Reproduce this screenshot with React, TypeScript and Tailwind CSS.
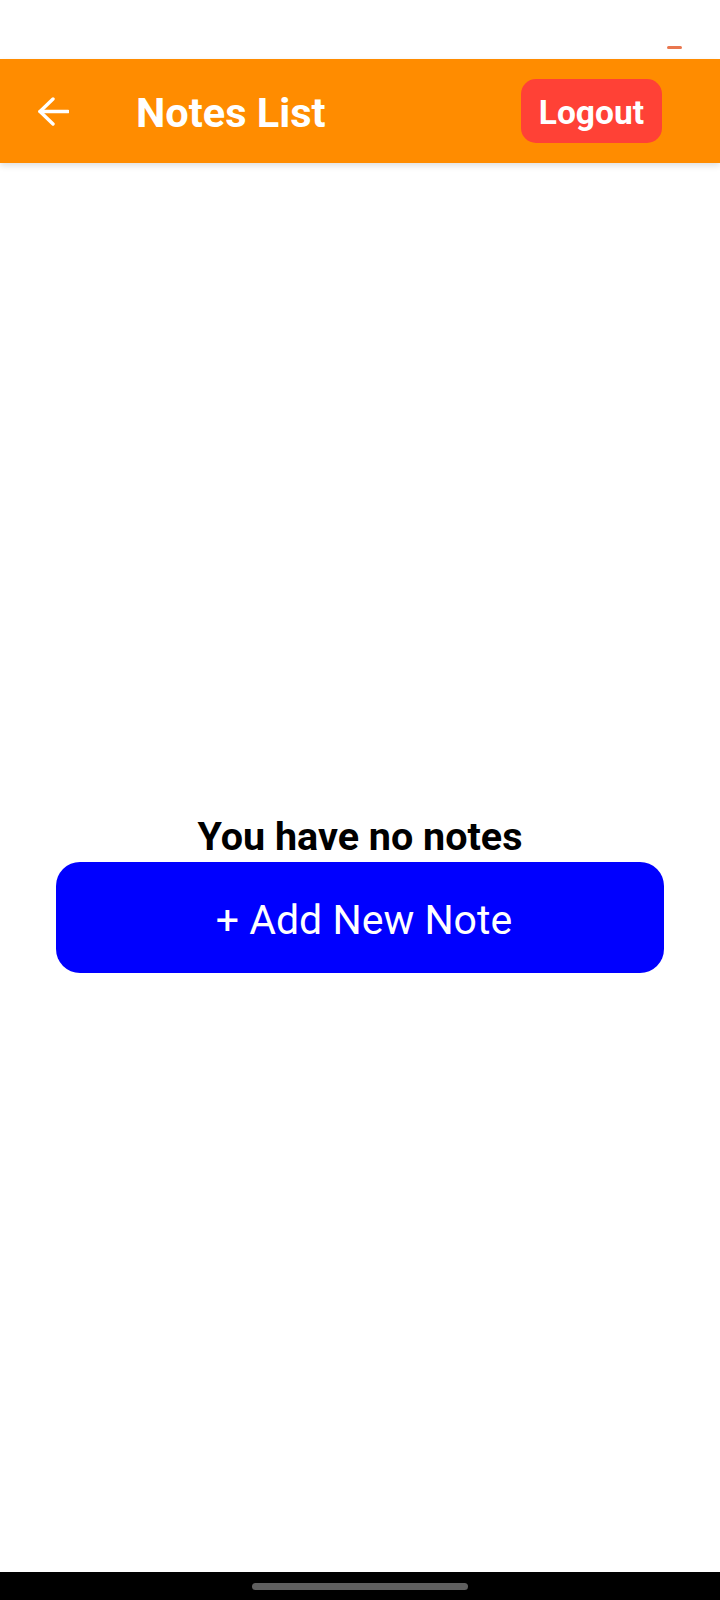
export default function App() {
  return (
    <div className="flex h-[1600px] w-[720px] flex-col bg-white font-['Roboto','Liberation_Sans',sans-serif]">
      {/* status bar */}
      <div className="flex h-[59px] shrink-0 items-start justify-end pr-[38px] pt-[46px]">
        <div className="h-[3px] w-[15px] rounded-full bg-[#e9774f]"></div>
      </div>

      {/* header */}
      <div className="relative z-10 flex h-[104px] shrink-0 items-center bg-[#ff8c00] pl-[38px] pr-[58px] shadow-[0_3px_6px_rgba(0,0,0,0.12)]">
        <svg width="31" height="29" viewBox="0 0 31 29" fill="none" stroke="white" strokeWidth="3.4" strokeLinecap="round" strokeLinejoin="round">
          <path d="M2 14.5H30" />
          <path d="M15 2L2 14.5L15 27" />
        </svg>
        <h1 className="ml-[67px] pt-[4px] text-[41.5px] leading-none font-bold text-white">Notes List</h1>
        <button className="ml-auto h-[64px] rounded-[15px] bg-[#ff4136] px-[18px] pt-[3px] text-[33.5px] leading-none font-bold text-white">
          Logout
        </button>
      </div>

      {/* content */}
      <div className="flex flex-1 flex-col items-center pt-[651px]">
        <p className="text-[39.5px] leading-[45px] font-bold text-black">You have no notes</p>
        <button className="mt-[3px] flex h-[111px] w-[608px] items-center justify-center rounded-[24px] bg-[#0000ff] pt-[6px] pl-[8px] text-[41px] text-white">
          + Add New Note
        </button>
      </div>

      {/* nav bar */}
      <div className="flex h-[28px] shrink-0 items-center justify-center bg-black">
        <div className="h-[7px] w-[216px] rounded-full bg-[#5f5f5f]"></div>
      </div>
    </div>
  );
}
